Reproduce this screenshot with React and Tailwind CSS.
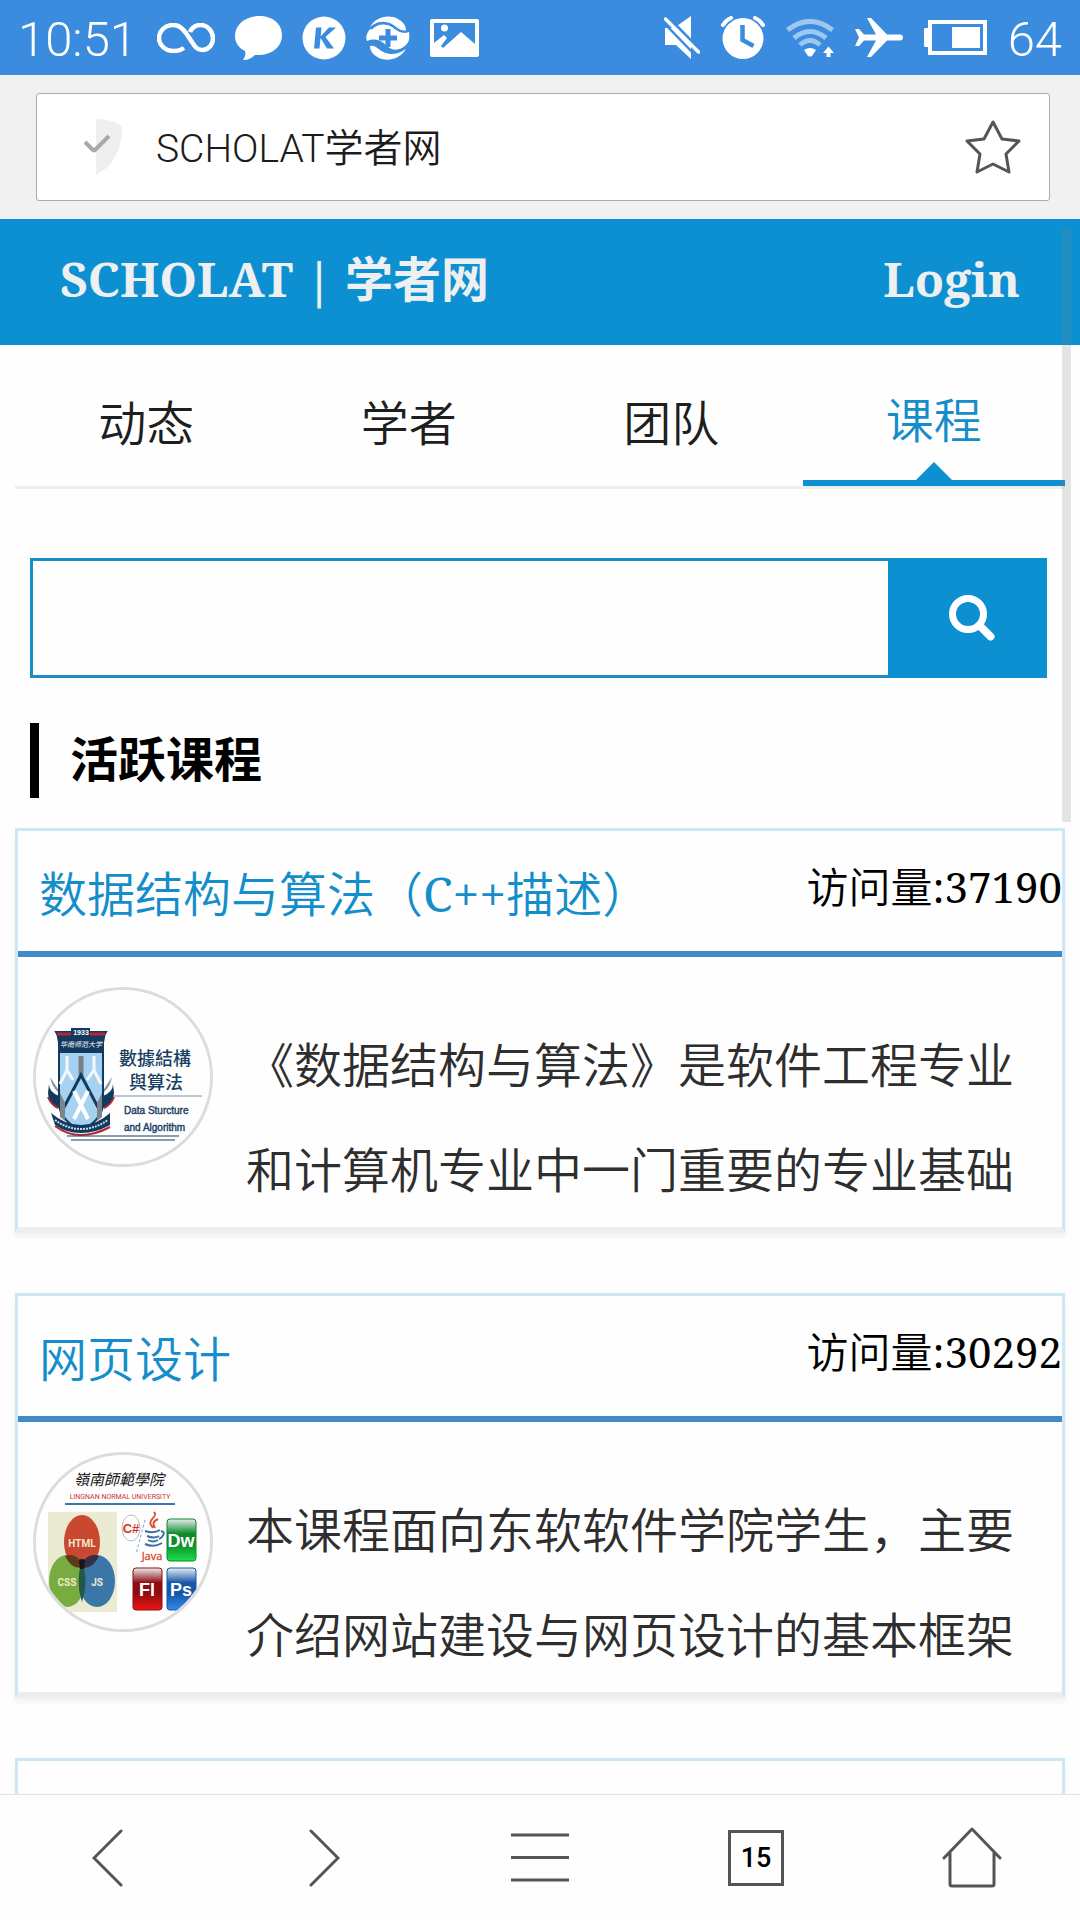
import React from "react";

const UI = "font-[Roboto,'Noto_Sans_CJK_SC_DemiLight','Noto_Sans_CJK_SC',sans-serif]";
const PAGE = "font-['Noto_Serif','Liberation_Serif','Noto_Sans_CJK_SC',serif]";
const BODY = "font-['Noto_Serif','Liberation_Serif','Noto_Sans_CJK_SC_DemiLight','Noto_Sans_CJK_SC',serif]";

/* ---------- status bar icons ---------- */

const InfinityIcon = () => (
  <svg width="58" height="30" viewBox="0 0 58 30" fill="none" stroke="#fff" strokeWidth="4.5">
    <path d="M27 25c-3 2-6 3-10 3C8 28 2 22 2 15S8 2 16 2c6 0 9 3 13 8l4 6c4 6 6 11 12 11 7 0 11-6 11-12S51 2 44 2c-5 0-9 2-11 7" />
  </svg>
);

const BubbleIcon = () => (
  <svg width="47" height="44" viewBox="0 0 47 44" fill="#fff">
    <path d="M24 0c14 0 23 8 23 19 0 12-10 20-24 20h-3c-3 3-7 5-12 5 2-3 3-5 2-9C4 32 0 27 0 20 0 9 10 0 24 0Z" />
  </svg>
);

const KIcon = () => (
  <svg width="44" height="44" viewBox="0 0 44 44">
    <circle cx="22" cy="22" r="21.500" fill="#fff" />
    <path d="M14 11.500h5.500l-2 21H12zM27 11.500h7L23.500 21l8.500 11.500h-7L18 21z" fill="#3b8cde" />
  </svg>
);

const PlusBallIcon = () => (
  <svg width="44" height="44" viewBox="0 0 44 44">
    <path d="M4 11C10 1 22-2 32 3c5 3 8 6 8 12-3 1-6 0-9-3C23 4 12 4 4 11Z" fill="#fff" />
    <path d="M1 18C4 9 18 5 26 11c5 4 10 7 17 5 1 6 0 10-3 13-6 6-14 6-19 1-6-6-11-8-20-5-1-2-1-5 0-7Z" fill="#fff" />
    <path d="M4 30c4-1 6 1 10 4 8 6 17 5 26-1-6 10-18 13-27 9-6-3-9-7-9-12Z" fill="#fff" />
    <path d="M22 13v18M13 22h18" stroke="#3b8cde" strokeWidth="5" />
    <path d="M5 13C12 6 21 6 27 10c5 4 9 7 15 5" fill="none" stroke="#3b8cde" strokeWidth="2" />
  </svg>
);

const PictureIcon = () => (
  <svg width="49" height="38" viewBox="0 0 49 38">
    <path fillRule="evenodd" d="M2 0h45a2 2 0 0 1 2 2v34a2 2 0 0 1-2 2H2a2 2 0 0 1-2-2V2a2 2 0 0 1 2-2Zm2 4v20l10-8 3 3-6 8 2 2L31 13l14 12V4Z" fill="#fff" />
    <circle cx="14.500" cy="9" r="3.500" fill="#fff" />
  </svg>
);

const MuteIcon = () => (
  <svg width="36" height="43" viewBox="0 0 36 43">
    <path d="M1 12h9L27 0v43L12 29H1z" fill="#fff" />
    <path d="M4 1 38 36" stroke="#3b8cde" strokeWidth="3" />
    <path d="M1.500 3 34.500 36" stroke="#fff" strokeWidth="3.500" strokeLinecap="round" />
    <path d="M-2 5 31 39" stroke="#3b8cde" strokeWidth="2.500" />
  </svg>
);

const AlarmIcon = () => (
  <svg width="44" height="43" viewBox="0 0 44 43">
    <circle cx="22" cy="22.500" r="20.500" fill="#fff" />
    <path d="M2 9q3-5 8-7M42 9q-3-5-8-7" stroke="#3b8cde" strokeWidth="7" fill="none" />
    <path d="M2 9q3-5 8-7M42 9q-3-5-8-7" stroke="#fff" strokeWidth="4" strokeLinecap="round" fill="none" />
    <path d="M21.500 9v15l11 6" stroke="#3b8cde" strokeWidth="4.500" fill="none" />
  </svg>
);

const WifiIcon = () => (
  <svg width="48" height="38" viewBox="0 0 48 38" fill="none">
    <g stroke="#9dc6f1" strokeWidth="5">
      <path d="M1.500 11q22.500-17 45 0" />
      <path d="M8 19q16-13 32 0" />
      <path d="M14 26q10-9 20 0" />
    </g>
    <path d="M18 31q6-4 12 0l-4 6q-2 1-4 0Z" fill="#fff" />
    <path d="M42.500 27.500 48 34h-3.500v4h-4v-4H37z" fill="#fff" />
  </svg>
);

const PlaneIcon = () => (
  <svg width="48" height="39" viewBox="0 0 48 39" fill="#fff">
    <path d="M12 0h4l16 16.500h13a3 3 0 0 1 0 6H32L16 39h-4l9-16.500H9L4 28H0l4-8.500L0 11h4l5 5.500h12z" />
  </svg>
);

const BatteryIcon = () => (
  <svg width="63" height="35" viewBox="0 0 63 35">
    <rect x="6" y="2" width="55" height="31" fill="none" stroke="#fff" strokeWidth="4" />
    <path d="M4 8h-3q-1 0-1 2v15q0 2 1 2h3zM28 7h28v21H28z" fill="#fff" />
  </svg>
);

/* ---------- course covers ---------- */

const AlgorithmCover = () => (
  <svg className="block size-full" viewBox="3 3 174 174" role="img" aria-label="數據結構與算法">
    <rect width="180" height="180" fill="#fefefe" />
    <path d="M23 45h50l-3 5v66c0 14-12 22-22 29-10-7-22-15-22-29V50z" fill="#a5d2f0" stroke="#123a5e" strokeWidth="2" />
    <path d="M23 45h50l-4 21H27z" fill="#123a5e" />
    <path d="M24 47h14M57 47h15" stroke="#b3263b" strokeWidth="3" />
    <rect x="38" y="41" width="19" height="8" fill="#123a5e" />
    <text x="48" y="48" textAnchor="middle" fontSize="7" fontWeight="700" fill="#fff" fontFamily="Liberation Sans">1933</text>
    <text x="48" y="60" textAnchor="middle" fontSize="7" fontStyle="italic" fill="#fff" fontFamily="Noto Sans CJK SC">华南师范大学</text>
    <path d="M34 69v14l-7 14M34 83l6 10M61 69v14l-7 10M61 83l7 14" stroke="#f4f8fb" strokeWidth="3" fill="none" />
    <path d="M48 69v20" stroke="#77818a" strokeWidth="5" />
    <path d="M28 126 48 88l20 38" stroke="#123a5e" strokeWidth="3" fill="none" />
    <path d="M41 104l14 28M55 104l-14 28" stroke="#fff" strokeWidth="4" />
    <path d="M27 106v24l5 4v-18zM69 106v24l-5 4v-18z" fill="#7b848c" />
    <path d="M16 97q0 8 10 12v12q-11-5-11-15zM80 97q0 8-10 12v12q11-5 11-15z" fill="#123a5e" />
    <path d="M15 110q3 8 10 11M81 110q-3 8-10 11" stroke="#b3263b" strokeWidth="2" fill="none" />
    <path d="M17 90q2 10 8 15v-3zM79 90q-2 10-8 15v-3z" fill="#8e959b" />
    <path d="M18 126q14 12 30 12t29-12v12q-14 8-29 8t-26-8z" fill="#123a5e" />
    <path d="M22 139q12 9 26 9t29-8" stroke="#b3263b" strokeWidth="2" fill="none" />
    <path d="M22 133q12 9 26 9t27-9" stroke="#c7d6e3" strokeWidth="2" strokeDasharray="2 1" fill="none" />
    <g fill="#173f63" fontFamily="Noto Sans CJK TC">
      <text x="122" y="78" textAnchor="middle" fontSize="18" fontWeight="500">數據結構</text>
      <text x="123" y="102" textAnchor="middle" fontSize="18" fontWeight="500">與算法</text>
    </g>
    <g fill="#173f63" stroke="#173f63" strokeWidth="0.4" fontFamily="Liberation Sans" fontSize="10">
      <text x="91" y="127">Data Sturcture</text>
      <text x="91" y="144">and Algorithm</text>
    </g>
    <path d="M80 109h89" stroke="#6f93ad" strokeWidth="1" />
    <path d="M34 149h112M38 153h104" stroke="#173f63" strokeWidth="1" />
  </svg>
);

const Tile = ({ x, y, id, from, to, label }) => (
  <g>
    <defs>
      <linearGradient id={id} x1="0" y1="0" x2="0" y2="1">
        <stop offset="0" stopColor="#e9eef0" />
        <stop offset="0.35" stopColor={from} />
        <stop offset="0.6" stopColor={from} />
        <stop offset="1" stopColor={to} />
      </linearGradient>
    </defs>
    <rect x={x} y={y} width="29" height="42" rx="3" fill={`url(#${id})`} stroke={from} />
    <text x={x + 14} y={y + 28} textAnchor="middle" fontSize="18" fontWeight="700" fill="#fff" fontFamily="Liberation Sans">{label}</text>
  </g>
);

const WebCover = () => (
  <svg className="block size-full" viewBox="3 3 174 174" role="img" aria-label="嶺南師範學院">
    <rect width="180" height="180" fill="#fefefe" />
    <text x="86" y="33" textAnchor="middle" fontSize="15" fontStyle="italic" fill="#111" fontFamily="Noto Sans CJK TC">嶺南師範學院</text>
    <text x="87" y="47" textAnchor="middle" fontSize="7" fill="#c8343a" fontFamily="Roboto">LINGNAN NORMAL UNIVERSITY</text>
    <path d="M32 52h110" stroke="#3c78b0" strokeWidth="2" />
    <rect x="15" y="60" width="69" height="100" fill="#ebead2" />
    <ellipse cx="49" cy="90" rx="18" ry="27" fill="#c8492f" />
    <ellipse cx="34" cy="129" rx="18" ry="26" fill="#79ab43" />
    <ellipse cx="64" cy="129" rx="18" ry="26" fill="#3a76a8" />
    <path d="M32 104q8-3 15 4 2 4 2 8-11 1-17-12Z" fill="#5c3a1d" />
    <path d="M66 104q-8-3-15 4-2 4-2 8 11 1 17-12Z" fill="#352f46" />
    <path d="M49 109q7 20 0 41-7-21 0-41Z" fill="#245747" />
    <path d="M46 108q3-2 6 0l-1 9h-4z" fill="#141a18" />
    <g fill="#f3e8c8" fontFamily="'Liberation Sans Narrow', Roboto" fontWeight="700" textAnchor="middle">
      <text x="49" y="95" fontSize="10">HTML</text>
      <text x="34" y="134" fontSize="10">CSS</text>
      <text x="64" y="134" fontSize="10">JS</text>
    </g>
    <ellipse cx="98" cy="76" rx="9" ry="13" fill="#fff" stroke="#b9b9b9" />
    <text x="98" y="81" textAnchor="middle" fontSize="13" fontWeight="700" fill="#d23527" fontFamily="'Liberation Sans Narrow', 'Liberation Sans'">C#</text>
    <path d="M112 68l-9 34" stroke="#6cb4e0" strokeDasharray="3 2" />
    <path d="M121 60c5 5-7 7-3 13l2 3M125 67c-6 3-5 5-3 9" fill="none" stroke="#d8553c" strokeWidth="2" />
    <path d="M112 79q9 3 15-1M114 84q7 3 12 0M115 88q5 3 10 0M112 92q9 4 17-1M128 79q5 1 1 6l-3 2" fill="none" stroke="#3f6f9f" strokeWidth="2" />
    <text x="119" y="108" textAnchor="middle" fontSize="11" fill="#d8452f" stroke="#d8452f" strokeWidth="0.3" fontFamily="Open Sans">Java</text>
    <Tile x={134} y={67} id="tileDw" from="#0d8a2c" to="#1ce04a" label="Dw" />
    <Tile x={100} y={116} id="tileFl" from="#8e0d12" to="#f01414" label="Fl" />
    <Tile x={134} y={116} id="tilePs" from="#1556a8" to="#2f8bea" label="Ps" />
  </svg>
);

/* ---------- page ---------- */

const TABS = ["动态", "学者", "团队", "课程"];

const COURSES = [
  {
    title: "数据结构与算法（C++描述）",
    visits: "37190",
    text: "《数据结构与算法》是软件工程专业和计算机专业中一门重要的专业基础",
    Cover: AlgorithmCover,
  },
  {
    title: "网页设计",
    visits: "30292",
    text: "本课程面向东软软件学院学生，主要介绍网站建设与网页设计的基本框架",
    Cover: WebCover,
  },
];

const CARD =
  "shrink-0 border-[3px] border-b-[6px] border-[#cce8f5] border-b-[#ededed] bg-[#fefefe] shadow-[0_4px_6px_rgba(0,0,0,0.05)]";

function CourseCard({ title, visits, text, Cover }) {
  return (
    <article className={`${CARD} ${BODY}`}>
      <header className="flex h-[126px] items-start justify-between border-b-[6px] border-[#4489c8] pl-[21px]">
        <h3 className="pt-[27px] text-[48px] leading-[72px] text-[#148dcb]">
          <a href="#course">{title}</a>
        </h3>
        <p className="pt-[24px] text-[42px] leading-[63px] text-black">访问量:{visits}</p>
      </header>
      <div className="flex h-[270px] overflow-hidden pr-12 pl-[15px]">
        <div className="mt-[30px] mr-[33px] size-[180px] shrink-0 overflow-hidden rounded-full border-[3px] border-[#dcdcdc]">
          <Cover />
        </div>
        <p className="mt-[55px] min-w-0 flex-1 text-[48px] leading-[105px] text-[#2e2e2e]">{text}</p>
      </div>
    </article>
  );
}

export default function App() {
  return (
    <div className="flex h-screen flex-col overflow-hidden bg-[#fefefe]">
      <div className={`${UI} flex h-[75px] shrink-0 items-center justify-between bg-[#3b8cde] px-[18px] text-[49px] leading-[60px] font-light text-white`}>
        <div className="flex items-center gap-5">
          <span className="pt-1">10:51</span>
          <InfinityIcon />
          <BubbleIcon />
          <KIcon />
          <PlusBallIcon />
          <PictureIcon />
        </div>
        <div className="flex items-center gap-[21px]">
          <MuteIcon />
          <AlarmIcon />
          <WifiIcon />
          <PlaneIcon />
          <BatteryIcon />
          <span className="pt-1">64</span>
        </div>
      </div>

      <div className={`${UI} shrink-0 bg-[#f1f1f1] py-[18px] pr-[30px] pl-[36px]`}>
        <div className="flex h-[108px] items-center rounded-[3px] border border-[#ababab] bg-white pr-[28px] pl-[46px]">
          <svg width="40" height="58" viewBox="0 0 40 58" className="shrink-0" aria-hidden="true">
            <path d="M13 1q15 0 26 7 0 36-26 49z" fill="#efefef" />
            <path d="M2 24l8 8q1 1 2 0L26 18" fill="none" stroke="#a9a9a9" strokeWidth="4" />
          </svg>
          <input
            aria-label="网址"
            readOnly
            value="SCHOLAT学者网"
            className="ml-[33px] min-w-0 flex-1 bg-transparent pt-1 text-[39px] leading-[60px] font-light text-[#1c1c1c] outline-none"
          />
          <button type="button" aria-label="收藏" className="shrink-0">
            <svg width="56" height="54" viewBox="0 0 56 54" fill="none" stroke="#555" strokeWidth="3" strokeLinejoin="round">
              <path d="M28 2l9 17 17 2-13 13 3 18-16-8-16 8 3-18L2 21l17-2z" />
            </svg>
          </button>
        </div>
      </div>

      <div className={`${PAGE} relative flex min-h-0 flex-1 flex-col overflow-hidden`}>
        <header className="flex h-[126px] shrink-0 items-center justify-between bg-[#0d90d1] px-[60px] pb-[6px] text-[48px] leading-[72px] font-bold text-[#eeeff1]">
          <a href="#home">SCHOLAT | 学者网</a>
          <a href="#login">Login</a>
        </header>

        <nav className={`${BODY} mx-[15px] grid h-[144px] shrink-0 grid-cols-4 border-b-[3px] border-[#eee] text-center text-[48px] leading-[72px] text-[#1e1e1e]`}>
          {TABS.map((tab) =>
            tab === "课程" ? (
              <a key={tab} href="#tab" aria-current="page" className="flex flex-col items-center justify-between border-b-[6px] border-[#0d90d1] pt-[39px] text-[#148dcb]">
                {tab}
                <svg width="36" height="18" viewBox="0 0 36 18" aria-hidden="true">
                  <path d="M18 0l18 18H0z" fill="#0d90d1" />
                </svg>
              </a>
            ) : (
              <a key={tab} href="#tab" className="pt-[42px]">
                {tab}
              </a>
            )
          )}
        </nav>

        <form className="mt-[69px] mr-[33px] ml-[30px] flex h-[120px] shrink-0" onSubmit={(e) => e.preventDefault()}>
          <input type="search" aria-label="搜索课程" className="min-w-0 flex-1 border-[3px] border-r-0 border-[#1c8cc4] bg-[#fefefe] px-6 text-[42px] outline-none" />
          <button type="submit" aria-label="搜索" className="flex w-[159px] items-center justify-center bg-[#0d90d1] pl-2">
            <svg width="46" height="46" viewBox="0 0 46 46" fill="none" stroke="#fff">
              <circle cx="19" cy="19" r="15.500" strokeWidth="7" />
              <path d="M31 31l10.500 10.500" strokeWidth="8" strokeLinecap="round" />
            </svg>
          </button>
        </form>

        <div className="mt-[45px] ml-[30px] h-[75px] shrink-0 border-l-[9px] border-black pl-[31px]">
          <h2 className="text-[48px] leading-[71px] font-bold text-black">活跃课程</h2>
        </div>

        <main className="mx-[15px] mt-[30px] flex flex-col gap-[60px]">
          {COURSES.map((course) => (
            <CourseCard key={course.title} {...course} />
          ))}
          <article className={`${CARD} h-[405px]`} />
        </main>

        <div className="absolute top-[9px] right-[9px] h-[594px] w-[9px] bg-[#7f7f7f]/20" />
      </div>

      <nav className={`${UI} grid h-[126px] shrink-0 grid-cols-5 place-items-center border-t border-[#e0e3e3] bg-[#fefefe]`}>
        <button type="button" aria-label="后退" className="flex size-[72px] items-center justify-center">
          <svg width="32" height="58" viewBox="0 0 32 58" fill="none" stroke="#555" strokeWidth="3" strokeLinecap="round">
            <path d="M29 2L2 29l27 27" />
          </svg>
        </button>
        <button type="button" aria-label="前进" className="flex size-[72px] items-center justify-center">
          <svg width="32" height="58" viewBox="0 0 32 58" fill="none" stroke="#555" strokeWidth="3" strokeLinecap="round">
            <path d="M3 2l27 27L3 56" />
          </svg>
        </button>
        <button type="button" aria-label="菜单" className="flex size-[72px] items-center justify-center">
          <svg width="58" height="49" viewBox="0 0 58 49" stroke="#555" strokeWidth="3">
            <path d="M0 2h58M0 24.500h58M0 47h58" />
          </svg>
        </button>
        <button type="button" aria-label="标签页" className="flex size-[56px] items-center justify-center border-[3px] border-[#555] text-[27px] leading-[30px] font-medium text-black">
          15
        </button>
        <button type="button" aria-label="主页" className="flex size-[72px] items-center justify-center">
          <svg width="60" height="62" viewBox="0 0 60 62" fill="none" stroke="#555" strokeWidth="3" strokeLinecap="round" strokeLinejoin="round">
            <path d="M2 31L30 2l28 29M8 26v31q0 2 2 2h40q2 0 2-2V26" />
          </svg>
        </button>
      </nav>
    </div>
  );
}
